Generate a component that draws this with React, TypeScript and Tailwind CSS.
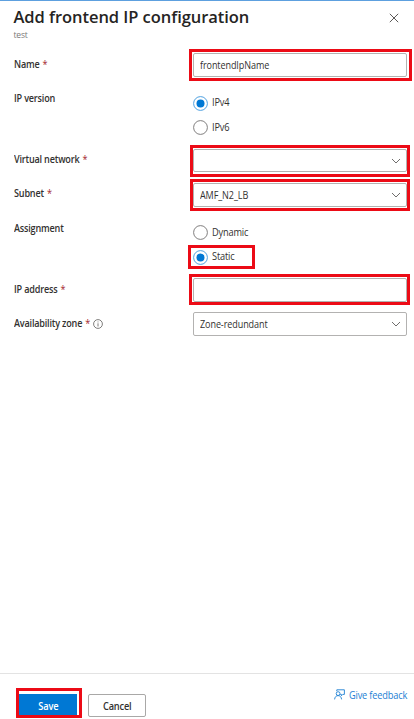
import type { ReactNode } from "react";

function Chevron() {
  return (
    <svg className="h-[6px] w-[10px] shrink-0" viewBox="0 0 10 6" fill="none" stroke="#605e5c" strokeWidth="0.9">
      <path d="M1 1 5 5 9 1" />
    </svg>
  );
}

function Highlight({ className }: { className: string }) {
  return <div className={`pointer-events-none absolute border-3 border-[#ec0b16] ${className}`} />;
}

function Row({ label, required, info, className, labelClass, children }: {
  label: string; required?: boolean; info?: boolean; className: string; labelClass: string; children: ReactNode;
}) {
  return (
    <div className={`flex items-start ${className}`}>
      <div className={`flex w-[180px] shrink-0 items-center pl-[0.5px] whitespace-nowrap text-[10.5px] leading-4 font-semibold tracking-[-0.22px] text-[#323130] ${labelClass}`}>
        <span className="inline-block origin-left scale-x-[0.865]">
          {label}
          {required && <span className="ml-[3.5px] font-normal text-[#a4262c]">*</span>}
        </span>
        {info && (
          <svg className="mt-[2px] -ml-[8px] h-[10px] w-[10px]" viewBox="0 0 10 10" fill="none" stroke="#605e5c" strokeWidth="0.8">
            <circle cx="5" cy="5" r="4.4" />
            <path d="M5 4.3v3.2M5 2.5v.9" />
          </svg>
        )}
      </div>
      <div className="relative w-[214px]">{children}</div>
    </div>
  );
}

function Field({ value, select, className }: { value?: string; select?: boolean; className: string }) {
  return (
    <div className={`flex items-center justify-between rounded-[2px] border border-[#b3b2b1] bg-white pr-[5px] pl-[6px] text-[10.5px] tracking-[-0.1px] text-[#323130] ${className}`}>
      <span className="inline-block origin-left scale-x-[0.86] pt-[2px]">{value}</span>
      {select && <Chevron />}
    </div>
  );
}

function Radio({ label, checked }: { label: string; checked?: boolean }) {
  return (
    <div className="flex h-[15px] items-center gap-1 text-[10.5px] tracking-[-0.2px] text-[#323130]">
      <svg className="h-[15px] w-[15px]" viewBox="0 0 15 15" fill="none">
        <circle cx="7.5" cy="7.5" r="6.9" stroke={checked ? "#3c96dd" : "#737170"} strokeWidth="0.9" />
        {checked && <circle cx="7.5" cy="7.5" r="4" fill="#0078d4" />}
      </svg>
      <span className="inline-block origin-left scale-x-[0.88]">{label}</span>
    </div>
  );
}

export default function App() {
  return (
    <div className="flex h-[719px] w-[414px] flex-col overflow-hidden border-t border-[#5da0df] bg-white font-['Open_Sans','Noto_Sans',sans-serif]">
      <header className="flex h-[40px] items-start justify-between pt-[5px] pr-[15px] pl-[13.5px]">
        <div>
          <h1 className="text-[16.5px] leading-[22px] font-semibold tracking-[-0.05px] whitespace-nowrap text-[#252423]">Add frontend IP configuration</h1>
          <div className="text-[8.5px] leading-[13px] tracking-[-0.2px] text-[#7a7978]">test</div>
        </div>
        <svg className="mt-[7px] h-[10px] w-[10px]" viewBox="0 0 10 10" fill="none" stroke="#484644" strokeWidth="0.9">
          <path d="m.8.8 8.4 8.4m0-8.4L.8 9.2" />
        </svg>
      </header>
      <main className="flex grow flex-col pt-[12px] pl-[13px]">
        <Row label="Name" required className="h-[24px]" labelClass="pt-[3px]">
          <Field value="frontendIpName" className="h-[24px]" />
          <Highlight className="-top-[4px] -right-[5px] -bottom-[4px] -left-[4px]" />
        </Row>
        <Row label="IP version" className="mt-[13px] h-[45px]" labelClass="">
          <div className="flex flex-col gap-[9.5px] pt-[5.5px]">
            <Radio label="IPv4" checked />
            <Radio label="IPv6" />
          </div>
        </Row>
        <Row label="Virtual network" required className="mt-[14px] h-[23px]" labelClass="pt-[2px]">
          <Field select className="h-[23px]" />
          <Highlight className="-top-[4px] -right-[3px] -bottom-[5px] -left-[3px]" />
        </Row>
        <Row label="Subnet" required className="mt-[11px] h-[24px]" labelClass="pt-[2px]">
          <Field value="AMF_N2_LB" select className="h-[24px]" />
          <Highlight className="-top-[4px] -right-[3px] -bottom-[4px] -left-[3px]" />
        </Row>
        <Row label="Assignment" className="mt-[13px] h-[45px]" labelClass="">
          <div className="flex flex-col gap-[9.5px] pt-[5px]">
            <Radio label="Dynamic" />
            <Radio label="Static" checked />
          </div>
          <Highlight className="top-[25px] -left-[5px] h-[24px] w-[67px]" />
        </Row>
        <Row label="IP address" required className="mt-[13px] h-[24px]" labelClass="pt-[3px]">
          <Field className="h-[24px]" />
          <Highlight className="-top-[4px] -right-[3px] -bottom-[3px] -left-[4px]" />
        </Row>
        <Row label="Availability zone" required info className="mt-[10px] h-[24px]" labelClass="pt-[3px]">
          <Field value="Zone-redundant" select className="h-[24px]" />
        </Row>
      </main>
      <footer className="flex h-[46px] shrink-0 items-start border-t border-[#e3e3e3] pt-[20px] pr-[7px] pl-[19px] text-[10.5px] font-semibold tracking-[-0.2px]">
        <div className="relative">
          <button className="block h-[23px] w-[58px] bg-[#0078d4] pt-[2px] text-white">
            <span className="inline-block scale-x-[0.88]">Save</span>
          </button>
          <Highlight className="-top-[6px] -right-[5px] -bottom-[1px] -left-[3px]" />
        </div>
        <button className="ml-[11px] h-[23px] w-[58px] rounded-[2px] border border-[#a9a8a7] bg-white pt-[2px] text-[#323130]">
          <span className="inline-block scale-x-[0.88]">Cancel</span>
        </button>
        <div className="-mt-[7px] ml-auto flex items-center font-normal text-[#1d80d4]">
          <svg className="-mt-[2px] -mr-[4px] h-[11px] w-[11px]" viewBox="0 0 11 11" fill="none" stroke="currentColor" strokeWidth="0.9">
            <path d="M2.8 2.2V.8h7.6v4.6H8.8L7.4 6.8V5.4H6.2" />
            <circle cx="4.1" cy="4.6" r="1.9" />
            <path d="M.6 10.4C.8 8 2.2 6.6 4.1 6.6S7.4 8 7.6 10.4" />
          </svg>
          <span className="inline-block origin-right scale-x-[0.88] leading-[16px]">Give feedback</span>
        </div>
      </footer>
    </div>
  );
}
